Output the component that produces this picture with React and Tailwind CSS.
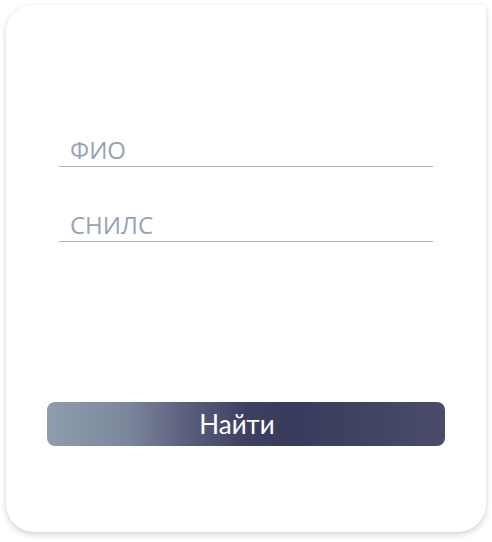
export default function App() {
  return (
    <div className="w-[492px] h-[542px] bg-white" style={{ fontFamily: '"Open Sans", "Noto Sans", sans-serif' }}>
      <div className="pt-[5px] pl-[6px] pr-[6px]">
        <div className="h-[527px] bg-white rounded-tl-[26px] rounded-tr-none rounded-b-[28px] shadow-[0_3px_6px_rgba(0,0,0,0.16),0_0_2px_rgba(0,0,0,0.06)] flex flex-col">
          <div className="pt-[126px] pl-[53px] pr-[53px] flex flex-col gap-[39px]">
            <div className="border-b border-[#aab4c2] pl-[11px] pb-[1px] h-[36px] flex items-end">
              <span className="text-[24px] leading-[30px] text-[#97a3b4]">ФИО</span>
            </div>
            <div className="border-b border-[#aab4c2] pl-[11px] pb-[1px] h-[36px] flex items-end">
              <span className="text-[24px] leading-[30px] text-[#97a3b4]">СНИЛС</span>
            </div>
          </div>
          <div className="mt-[160px] px-[41px]">
            <button
              className="w-full h-[44px] rounded-[8px] text-white text-[26px] leading-[44px] pr-[18px] bg-[linear-gradient(90deg,#8f9dad_0%,#7c879c_20%,#5b5f7c_35%,#3e4062_50%,#393b5c_62%,#414363_80%,#4a4c6a_100%)]"
              style={{ fontFamily: 'Lato, "Open Sans", sans-serif' }}
            >
              Найти
            </button>
          </div>
        </div>
      </div>
    </div>
  );
}
